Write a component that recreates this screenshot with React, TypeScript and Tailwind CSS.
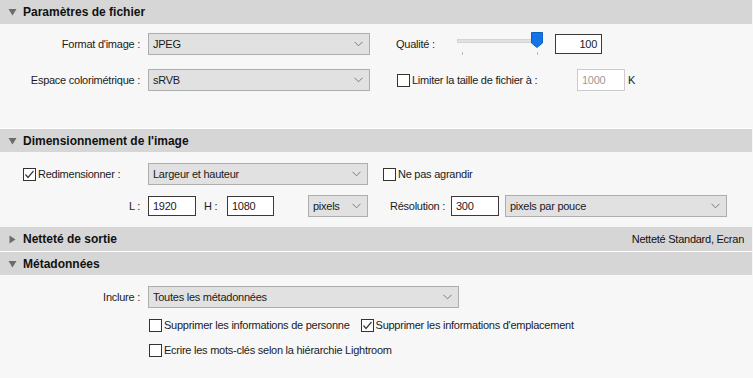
import React from 'react';

const Chevron = () => (
  <svg width="9" height="6" viewBox="0 0 9 6" className="shrink-0">
    <path d="M0.5 0.8 L4.5 4.8 L8.5 0.8" fill="none" stroke="#7a7a7a" strokeWidth="1" />
  </svg>
);

const Select: React.FC<{ value: string; width: string }> = ({ value, width }) => (
  <div className={`${width} h-[22px] bg-[#e1e1e1] border border-[#adadad] flex items-center justify-between pl-[4px] pr-[6px]`}>
    <span>{value}</span>
    <Chevron />
  </div>
);

const TextBox: React.FC<{ value: string; width: string; right?: boolean; disabled?: boolean }> = ({ value, width, right, disabled }) => (
  <div
    className={`${width} bg-white border flex items-center px-[4px] ${right ? 'justify-end' : ''} ${
      disabled ? 'border-[#cccccc] text-[#9a9a9a] h-[22px]' : 'border-[#3a3a3a] h-[20px]'
    }`}
  >
    {value}
  </div>
);

const CheckBox: React.FC<{ checked?: boolean }> = ({ checked }) => (
  <div className="w-[13px] h-[13px] bg-white border border-[#333333] flex items-center justify-center shrink-0">
    {checked && (
      <svg width="11" height="11" viewBox="0 0 11 11">
        <path d="M1.5 5.5 L4 8.5 L9.5 2" fill="none" stroke="#3c3c3c" strokeWidth="1.2" />
      </svg>
    )}
  </div>
);

const Header: React.FC<{ title: string; open?: boolean; right?: string; line?: boolean }> = ({ title, open = true, right, line }) => (
  <div className={`mr-[1px] h-[24px] bg-[#d6d6d6] flex items-center pl-[8px] pr-[8px] ${line ? 'border-t border-white' : ''}`}>
    {open ? (
      <svg width="9" height="8" viewBox="0 0 9 8" className="mr-[6px]">
        <path d="M0.5 1 L8.5 1 L4.5 7.5 Z" fill="#6b6b6b" />
      </svg>
    ) : (
      <svg width="9" height="9" viewBox="0 0 9 9" className="mr-[6px]">
        <path d="M1.5 0.5 L7.5 4.5 L1.5 8.5 Z" fill="#6b6b6b" />
      </svg>
    )}
    <span className="font-bold text-[12px] tracking-normal text-[#111]">{title}</span>
    {right && <span className="ml-auto text-[11px] text-[#111]">{right}</span>}
  </div>
);

const QualitySlider = () => (
  <div className="relative w-[98px] h-[24px]">
    <div className="absolute left-[0px] w-[84px] top-[7px] h-[4px] bg-[#e2e2e2] border border-[#d4d4d4]" />
    <div className="absolute left-[5px] top-[20px] w-[1px] h-[3px] bg-[#bdbdbd]" />
    <div className="absolute left-[80px] top-[20px] w-[1px] h-[3px] bg-[#bdbdbd]" />
    <svg width="12" height="16" viewBox="0 0 12 16" className="absolute left-[74px] top-[0px]">
      <path d="M0.5 0.5 H11.5 V11 L6 15.5 L0.5 11 Z" fill="#1473e6" stroke="#0d5fc2" strokeWidth="1" />
    </svg>
  </div>
);

export default function App() {
  return (
    <div className="w-[753px] h-[378px] overflow-hidden bg-[#f7f7f7] text-[11px] tracking-[-0.25px] whitespace-nowrap text-[#1b1b1b] font-['Liberation_Sans',Arial,sans-serif]">
      <Header title="Paramètres de fichier" />
      <div className="h-[104px] pt-[9px] flex flex-col gap-[14px]">
        <div className="flex items-center h-[22px]">
          <div className="w-[140px] text-right">Format d'image :</div>
          <div className="ml-[8px]"><Select value="JPEG" width="w-[222px]" /></div>
          <div className="ml-[26px] w-[61px]">Qualité :</div>
          <QualitySlider />
          <TextBox value="100" width="w-[47px]" right />
        </div>
        <div className="flex items-center h-[22px]">
          <div className="w-[140px] text-right">Espace colorimétrique :</div>
          <div className="ml-[8px]"><Select value="sRVB" width="w-[222px]" /></div>
          <div className="ml-[27px] flex items-center gap-[2px]">
            <CheckBox />
            <span>Limiter la taille de fichier à :</span>
          </div>
          <div className="ml-auto mr-[118px] flex items-center gap-[3px]">
            <TextBox value="1000" width="w-[48px]" disabled />
            <span>K</span>
          </div>
        </div>
      </div>

      <Header title="Dimensionnement de l'image" line />
      <div className="h-[75px] pt-[11px] flex flex-col gap-[10px]">
        <div className="flex items-center h-[22px]">
          <div className="w-[148px] pl-[23px] flex items-center gap-[2px]">
            <CheckBox checked />
            <span>Redimensionner :</span>
          </div>
          <Select value="Largeur et hauteur" width="w-[220px]" />
          <div className="ml-[15px] flex items-center gap-[2px]">
            <CheckBox />
            <span>Ne pas agrandir</span>
          </div>
        </div>
        <div className="flex items-center h-[22px]">
          <div className="w-[140px] text-right">L :</div>
          <div className="ml-[8px]"><TextBox value="1920" width="w-[48px]" /></div>
          <div className="ml-[8px] w-[23px]">H :</div>
          <TextBox value="1080" width="w-[47px]" />
          <div className="ml-[34px]"><Select value="pixels" width="w-[60px]" /></div>
          <div className="ml-[22px] w-[61px]">Résolution :</div>
          <TextBox value="300" width="w-[48px]" />
          <div className="ml-[6px]"><Select value="pixels par pouce" width="w-[222px]" /></div>
        </div>
      </div>

      <Header title="Netteté de sortie" open={false} right="Netteté Standard, Ecran" />
      <Header title="Métadonnées" line />
      <div className="pt-[11px] flex flex-col">
        <div className="flex items-center h-[22px]">
          <div className="w-[140px] text-right">Inclure :</div>
          <div className="ml-[8px]"><Select value="Toutes les métadonnées" width="w-[311px]" /></div>
        </div>
        <div className="flex items-center h-[14px] mt-[10px] pl-[149px]">
          <CheckBox />
          <span className="ml-[2px]">Supprimer les informations de personne</span>
          <div className="ml-[11px] flex items-center gap-[2px]">
            <CheckBox checked />
            <span>Supprimer les informations d'emplacement</span>
          </div>
        </div>
        <div className="flex items-center h-[14px] mt-[11px] pl-[149px]">
          <CheckBox />
          <span className="ml-[2px]">Ecrire les mots-clés selon la hiérarchie Lightroom</span>
        </div>
      </div>
    </div>
  );
}
